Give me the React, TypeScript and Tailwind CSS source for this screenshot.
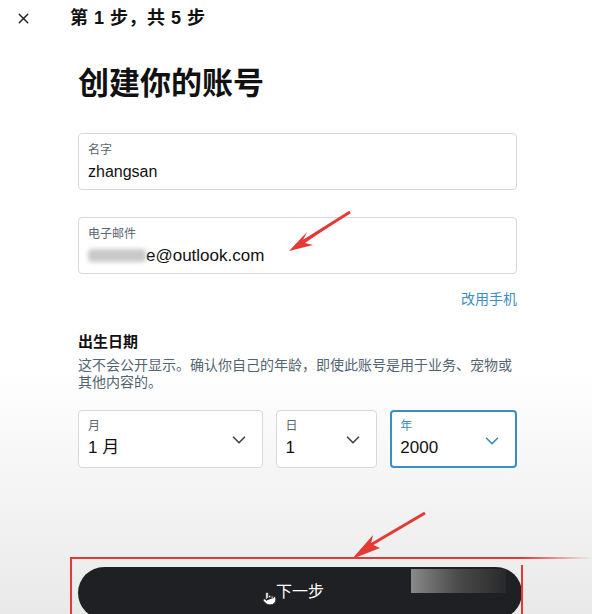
import { X, ChevronDown, Pointer } from "lucide-react";

const font = "font-['Liberation_Sans','Noto_Sans_CJK_SC',sans-serif]";

function Field({ label, children }: { label: string; children: React.ReactNode }) {
  return (
    <div className="h-[57px] rounded-[4px] border border-[#d3d9dd] bg-white px-[9px] pt-[8px]">
      <div className="text-[12px] leading-[16px] text-[#5b6570]">{label}</div>
      <div className="mt-[4px] text-[16px] leading-[20px] text-[#111]">{children}</div>
    </div>
  );
}

function Select({
  label,
  value,
  width,
  active = false,
}: {
  label: string;
  value: string;
  width: string;
  active?: boolean;
}) {
  return (
    <div
      className={`relative h-[58px] rounded-[4px] bg-white ${width} ${
        active ? "border-2 border-[#3b8dc2] px-[8px] pt-[6px]" : "border border-[#d3d9dd] px-[9px] pt-[7px]"
      }`}
    >
      <div className={`text-[12px] leading-[16px] ${active ? "text-[#3b8dc2]" : "text-[#5b6570]"}`}>{label}</div>
      <div className="mt-[3px] text-[17px] leading-[22px] text-[#111]">{value}</div>
      <ChevronDown
        className={`absolute right-[12px] top-[18px] ${active ? "text-[#3b8dc2]" : "text-[#444]"}`}
        size={22}
        strokeWidth={1.8}
      />
    </div>
  );
}

export default function App() {
  return (
    <div
      className={`relative h-[614px] w-[592px] overflow-hidden bg-gradient-to-b from-white via-white via-60% to-[#e9e9e9] ${font}`}
    >
      {/* header */}
      <div className="flex h-[36px] items-center">
        <X className="ml-[15px] text-[#222]" size={17} strokeWidth={2} />
        <div className="ml-[38px] text-[18px] font-bold tracking-[0.5px] text-[#111]">第 1 步，共 5 步</div>
      </div>

      <div className="pl-[78px] pr-[75px]">
        <h1 className="mt-[30px] text-[31px] font-bold leading-[36px] text-[#111]">创建你的账号</h1>

        <div className="mt-[31px]">
          <Field label="名字">zhangsan</Field>
        </div>

        <div className="mt-[27px]">
          <Field label="电子邮件">
            <span className="text-[17px]">
              <span className="inline-block h-[13px] w-[58px] rounded-sm bg-[#c9c9c9] align-[-1px] blur-[2px]" />
              e@outlook.com
            </span>
          </Field>
        </div>

        <div className="mt-[16px] text-right text-[14px] leading-[18px] text-[#3b8dc2]">改用手机</div>

        <div className="mt-[24px] text-[15px] font-bold leading-[20px] text-[#111]">出生日期</div>
        <p className="mt-[5px] text-[14px] leading-[17px] text-[#536471]">
          这不会公开显示。确认你自己的年龄，即使此账号是用于业务、宠物或其他内容的。
        </p>

        <div className="mt-[19px] flex gap-[13px]">
          <Select label="月" value="1 月" width="w-[185px]" />
          <Select label="日" value="1" width="w-[102px]" />
          <Select label="年" value="2000" width="w-[127px]" active />
        </div>

        <button className="relative mt-[99px] flex h-[52px] w-[444px] items-start justify-center overflow-hidden rounded-full bg-[#1f2024] pt-[13px] text-[16px] text-white">
          下一步
          <span className="absolute right-[16px] top-[2px] h-[24px] w-[95px] bg-gradient-to-r from-[#8a8a8a] via-[#4a4a4a] to-[#2a2a2c]" />
          <Pointer className="absolute left-[184px] top-[24px] fill-white text-[#333]" size={15} strokeWidth={1.5} />
        </button>
      </div>

      {/* annotations */}
      <svg className="pointer-events-none absolute inset-0" width="592" height="614">
        <defs>
          <linearGradient id="fade" x1="0" x2="1" y1="0" y2="0">
            <stop offset="0" stopColor="#e53935" stopOpacity="1" />
            <stop offset="1" stopColor="#e53935" stopOpacity="0" />
          </linearGradient>
        </defs>
        <path d="M350 212 L303 240 L307 232 L289 251 L313 245 L305 243 Z" fill="#e53935" />
        <path d="M350 212 L296 246" stroke="#e53935" strokeWidth="3" />
        <path d="M425 513 L362 550" stroke="#e53935" strokeWidth="3" />
        <path d="M352 559 L373 535 L371 544 L380 548 Z" fill="#e53935" />
        <rect x="70" y="557" width="452" height="2" fill="#e53935" />
        <rect x="522" y="557" width="70" height="2" fill="url(#fade)" />
        <rect x="70" y="557" width="2" height="57" fill="#e53935" />
        <rect x="521" y="565" width="2" height="49" fill="#e53935" />
      </svg>
    </div>
  );
}
